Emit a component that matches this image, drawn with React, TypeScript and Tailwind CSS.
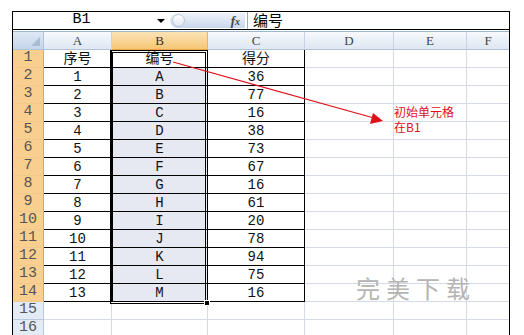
import React from 'react';

const cols = ['A', 'B', 'C', 'D', 'E', 'F'];
const colW = ['w-[68px]', 'w-[96px]', 'w-[97px]', 'w-[89px]', 'w-[73px]', 'w-[42px]'];

const data: [string, string, string][] = [
  ['序号', '编号', '得分'],
  ['1', 'A', '36'],
  ['2', 'B', '77'],
  ['3', 'C', '16'],
  ['4', 'D', '38'],
  ['5', 'E', '73'],
  ['6', 'F', '67'],
  ['7', 'G', '16'],
  ['8', 'H', '61'],
  ['9', 'I', '20'],
  ['10', 'J', '78'],
  ['11', 'K', '94'],
  ['12', 'L', '75'],
  ['13', 'M', '16'],
];

const cellFont = { fontFamily: '"Liberation Mono", "Noto Sans CJK SC", monospace' };

function FormulaBar() {
  return (
    <div className="flex h-[19px] border border-black bg-white">
      <div className="relative flex w-[155px] items-center justify-center pr-[18px] text-[15px] text-black" style={cellFont}>
        B1
        <span className="absolute right-[3px] top-[7px] h-0 w-0 border-x-[4px] border-t-[4px] border-x-transparent border-t-black" />
      </div>
      <div className="my-[1px] ml-[2px] flex w-[75px] items-center justify-between rounded-l-full rounded-r-[2px] bg-gradient-to-b from-[#eef3fa] to-[#c9d7ea] pr-[5px]">
        <span className="ml-[2px] h-[13px] w-[13px] rounded-full border border-[#b8c6d8] bg-gradient-to-b from-white to-[#dfe7f1]" />
        <span className="text-[13px] font-bold italic text-[#444]" style={{ fontFamily: '"Liberation Serif", serif' }}>
          f<span className="text-[10px]">x</span>
        </span>
      </div>
      <div className="ml-[2px] w-px bg-[#9aa9bd]" />
      <div className="flex items-center pl-[5px] text-[15px] text-black" style={{ fontFamily: '"Noto Sans CJK SC", sans-serif' }}>
        编号
      </div>
    </div>
  );
}

function HeaderRow() {
  return (
    <div className="flex h-[19px] border-t border-[#9eb6ce]">
      <div className="relative w-[31px] border-r border-b border-[#b1c3d8] bg-gradient-to-b from-[#dfe8f5] to-[#c5d5ea]">
        <span className="absolute bottom-[3px] right-[3px] h-0 w-0 border-l-[9px] border-b-[9px] border-l-transparent border-b-[#aabcd4]" />
      </div>
      {cols.map((c, i) => (
        <div
          key={c}
          className={`${colW[i]} flex items-center justify-center border-b text-[13px] ${
            c === 'B'
              ? 'border-r border-[#f0b25a] border-b-[#e8a545] bg-gradient-to-b from-[#fbe3b5] to-[#f6c676] text-[#333]'
              : c === 'F'
                ? 'border-[#b1c3d8] bg-gradient-to-b from-[#f7f9fc] to-[#dee7f3] text-[#444]'
                : 'border-r border-[#c7d4e5] border-b-[#b1c3d8] bg-gradient-to-b from-[#f7f9fc] to-[#dee7f3] text-[#444]'
          }`}
          style={{ fontFamily: '"Liberation Serif", serif' }}
        >
          {c}
        </div>
      ))}
    </div>
  );
}

function Row({ n, vals }: { n: number; vals?: [string, string, string] }) {
  const active = n <= 14;
  return (
    <div className="flex h-[18px]">
      <div
        className={`flex w-[31px] items-center justify-center border-r border-b text-[15px] ${
          active
            ? 'border-r-[#e8a545] border-b-[#f0c98f] bg-[#f9cf8f] text-[#555]'
            : 'border-[#b9c9dd] bg-[#e3ebf6] text-[#555]'
        }`}
        style={cellFont}
      >
        {n}
      </div>
      {cols.map((c, i) => {
        const inTable = vals && i < 3;
        const sel = c === 'B' && n >= 2 && n <= 14;
        let cls = 'border-r border-b border-[#d4dbe6]';
        if (inTable) cls = 'border-r border-b border-black';
        if (i === 5) cls = 'border-b border-[#d4dbe6]';
        return (
          <div
            key={c}
            className={`${colW[i]} flex items-center justify-center text-[14px] leading-none text-[#111] ${cls} ${sel ? 'bg-[#e6e8f2]' : 'bg-white'}`}
            style={cellFont}
          >
            {inTable ? vals![i] : ''}
          </div>
        );
      })}
    </div>
  );
}

export default function App() {
  return (
    <div className="relative h-[335px] w-[524px] overflow-hidden bg-white">
      <div className="ml-[12px] mt-[11px] w-[498px]">
        <FormulaBar />
        <div className="border-x border-black bg-white pt-[1px]">
          <HeaderRow />
          {Array.from({ length: 16 }, (_, k) => (
            <Row key={k} n={k + 1} vals={data[k]} />
          ))}
        </div>
      </div>

      {/* selection box B1:B14 */}
      <div className="absolute left-[110px] top-[50px] h-[254px] w-[98px] border-[3px] border-double border-black" />
      <div className="absolute left-[204px] top-[300px] h-[6px] w-[6px] border border-white bg-black" />

      {/* annotation arrow */}
      <svg className="absolute left-0 top-0" width="524" height="335">
        <line x1="173" y1="62" x2="374" y2="118" stroke="#e0101a" strokeWidth="1.2" />
        <polygon points="383,121 370,124 373,113" fill="#e0101a" />
      </svg>
      <div
        className="absolute left-[394px] top-[104px] flex flex-col text-[12px] leading-[15px] text-[#e0101a]"
        style={{ fontFamily: '"Noto Sans CJK SC", sans-serif' }}
      >
        <span>初始单元格</span>
        <span>在B1</span>
      </div>

      <div
        className="absolute left-[356px] top-[273px] text-[24px] leading-[30px] tracking-[6px] text-[#b4b4b4]"
        style={{ fontFamily: '"Noto Sans CJK SC", sans-serif' }}
      >
        完美下载
      </div>
    </div>
  );
}
